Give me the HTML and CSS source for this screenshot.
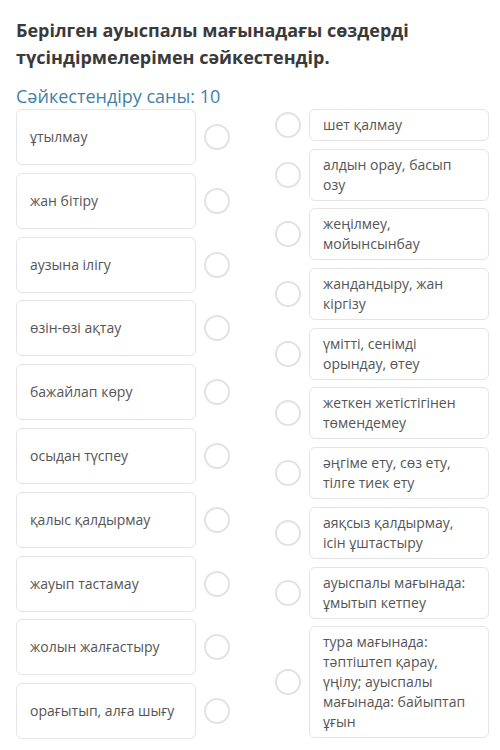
FILE: index.html
```html
<!DOCTYPE html>
<html lang="kk">
<head>
<meta charset="utf-8">
<title>Сәйкестендіру</title>
<link rel="stylesheet" href="styles.css">
</head>
<body>
<div class="page">
  <h1 class="title">Берілген ауыспалы мағынадағы сөздерді түсіндірмелерімен сәйкестендір.</h1>
  <div class="count">Сәйкестендіру саны: 10</div>
  <div class="match">
    <div class="col col-left">
      <div class="row"><div class="card card-left">ұтылмау</div><span class="dot"></span></div>
      <div class="row"><div class="card card-left">жан бітіру</div><span class="dot"></span></div>
      <div class="row"><div class="card card-left">аузына ілігу</div><span class="dot"></span></div>
      <div class="row"><div class="card card-left">өзін-өзі ақтау</div><span class="dot"></span></div>
      <div class="row"><div class="card card-left">бажайлап көру</div><span class="dot"></span></div>
      <div class="row"><div class="card card-left">осыдан түспеу</div><span class="dot"></span></div>
      <div class="row"><div class="card card-left">қалыс қалдырмау</div><span class="dot"></span></div>
      <div class="row"><div class="card card-left">жауып тастамау</div><span class="dot"></span></div>
      <div class="row"><div class="card card-left">жолын жалғастыру</div><span class="dot"></span></div>
      <div class="row"><div class="card card-left">орағытып, алға шығу</div><span class="dot"></span></div>
    </div>
    <div class="col col-right">
      <div class="row"><span class="dot"></span><div class="card card-right">шет қалмау</div></div>
      <div class="row"><span class="dot"></span><div class="card card-right">алдын орау, басып озу</div></div>
      <div class="row"><span class="dot"></span><div class="card card-right">жеңілмеу, мойынсынбау</div></div>
      <div class="row"><span class="dot"></span><div class="card card-right">жандандыру, жан кіргізу</div></div>
      <div class="row"><span class="dot"></span><div class="card card-right">үмітті, сенімді орындау, өтеу</div></div>
      <div class="row"><span class="dot"></span><div class="card card-right">жеткен жетістігінен төмендемеу</div></div>
      <div class="row"><span class="dot"></span><div class="card card-right">әңгіме ету, сөз ету, тілге тиек ету</div></div>
      <div class="row"><span class="dot"></span><div class="card card-right">аяқсыз қалдырмау, ісін ұштастыру</div></div>
      <div class="row"><span class="dot"></span><div class="card card-right">ауыспалы мағынада: ұмытып кетпеу</div></div>
      <div class="row"><span class="dot"></span><div class="card card-right">тура мағынада: тәптіштеп қарау, үңілу; ауыспалы мағынада: байыптап ұғын</div></div>
    </div>
  </div>
</div>
</body>
</html>
```

FILE: styles.css
```css
* { box-sizing: border-box; }
html, body { margin: 0; padding: 0; background: #ffffff; }
body { font-family: "Open Sans", "Noto Sans", sans-serif; color: #555555; }
.page { padding: 17px 16px 0 16px; width: 500px; }
.title {
  margin: 0;
  font-size: 18px;
  line-height: 27px;
  font-weight: 700;
  color: #3a3a3a;
}
.count {
  margin-top: 13px;
  font-size: 18px;
  line-height: 24px;
  color: #3f82a5;
}
.match {
  margin-top: 1px;
  display: flex;
  justify-content: space-between;
  width: 473px;
}
.col { display: flex; flex-direction: column; }
.col-left { gap: 7.8px; }
.col-right { gap: 7.7px; }
.row { display: flex; align-items: center; gap: 8px; }
.card {
  width: 180px;
  border: 1px solid #e4e4e4;
  border-radius: 6px;
  background: #fff;
  font-size: 14px;
  line-height: 20px;
  color: #555555;
  padding: 5px 13px;
}
.card-left {
  height: 56px;
  display: flex;
  align-items: center;
}
.dot {
  width: 26px;
  height: 26px;
  border: 2px solid #e2e2e2;
  border-radius: 50%;
  flex: none;
  background: #fff;
}
```
